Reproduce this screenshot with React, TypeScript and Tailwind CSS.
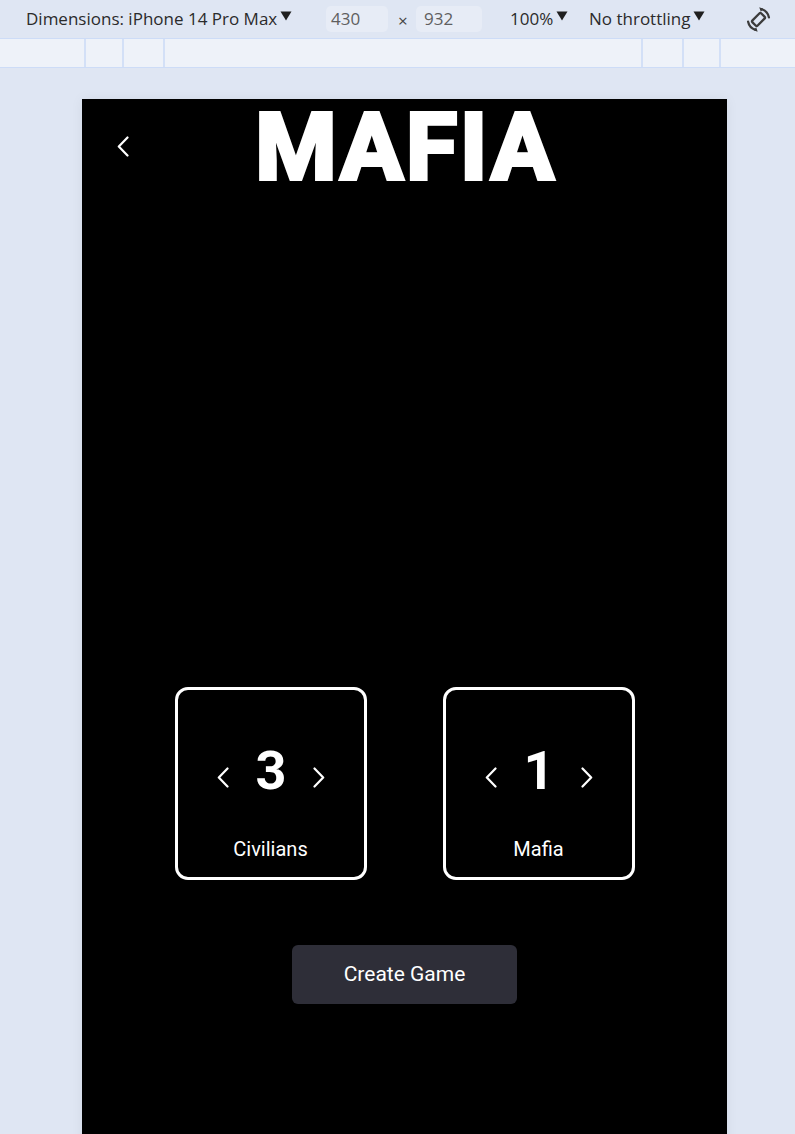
import React, { useState } from 'react';

const Chevron = ({ dir, className }: { dir: 'left' | 'right'; className?: string }) => (
  <svg width="12" height="21" viewBox="0 0 12 21" fill="none" className={className}>
    {dir === 'left' ? (
      <polyline points="10.5,1.5 1.8,10.5 10.5,19.5" stroke="white" strokeWidth="2.2" strokeLinecap="round" strokeLinejoin="round" />
    ) : (
      <polyline points="1.5,1.5 10.2,10.5 1.5,19.5" stroke="white" strokeWidth="2.2" strokeLinecap="round" strokeLinejoin="round" />
    )}
  </svg>
);

const Caret = () => (
  <svg width="12" height="10" viewBox="0 0 12 10" className="ml-[3px] -mt-[6px]">
    <path d="M0.5 0.5h11L6 9.5z" fill="#1f1f1f" />
  </svg>
);

const RotateIcon = () => (
  <svg width="27" height="27" viewBox="0 0 28 28" fill="none">
    <g stroke="#3c3c3c" strokeWidth="2.4" strokeLinecap="round" strokeLinejoin="round">
      <rect x="10.2" y="7.5" width="7.6" height="13" rx="1.5" transform="rotate(45 14 14)" />
      <path d="M17 3.3a11 11 0 0 1 7.8 8.5" />
      <path d="M11 24.7a11 11 0 0 1-7.8-8.5" />
    </g>
    <path d="M14.8 1.2l4.2 1.6-2.6 3.1z" fill="#3c3c3c" />
    <path d="M13.2 26.8l-4.2-1.6 2.6-3.1z" fill="#3c3c3c" />
  </svg>
);

const Counter = ({ value, label, onDec, onInc }: { value: number; label: string; onDec: () => void; onInc: () => void }) => (
  <div className="w-[192px] h-[193px] rounded-[13px] border-[3px] border-white flex flex-col items-center pt-[54px]">
    <div className="flex items-center gap-[27px]">
      <button onClick={onDec} className="mt-[12px]">
        <Chevron dir="left" />
      </button>
      <span className="text-[54px] leading-none font-bold text-white w-[30px] text-center">{value}</span>
      <button onClick={onInc} className="mt-[12px]">
        <Chevron dir="right" />
      </button>
    </div>
    <span className="mt-[41px] text-[20px] leading-none text-white">{label}</span>
  </div>
);

export default function App() {
  const [civilians, setCivilians] = useState(3);
  const [mafia, setMafia] = useState(1);

  return (
    <div className="w-[795px] h-[1134px] overflow-hidden bg-[#dfe6f3] font-['Open_Sans',sans-serif]">
      {/* devtools toolbar */}
      <div className="h-[38px] flex items-center text-[17px] text-[#2b2b2b]">
        <div className="ml-[26px] w-[300px] flex items-center">
          Dimensions: iPhone 14 Pro Max
          <Caret />
        </div>
        <div className="w-[62px] h-[26px] rounded-[5px] bg-[#e7ecf6] text-[#5f5f5f] flex items-center pl-[5px]">430</div>
        <span className="ml-[10px] w-[16px] text-[#444] text-[17px] mt-[3px]">×</span>
        <div className="ml-[2px] w-[66px] h-[26px] rounded-[5px] bg-[#e7ecf6] text-[#5f5f5f] flex items-center pl-[8px]">932</div>
        <div className="ml-[28px] w-[79px] flex items-center">
          100%
          <Caret />
        </div>
        <div className="w-[156px] flex items-center">
          No throttling
          <Caret />
        </div>
        <div className="mt-[1px]">
          <RotateIcon />
        </div>
      </div>
      {/* ruler row */}
      <div className="h-[30px] bg-[#eef2f9] border-y border-[#cddcf7] flex">
        <div className="w-[86px] border-r-2 border-[#d3e0f7]" />
        <div className="w-[38px] border-r-2 border-[#d3e0f7]" />
        <div className="w-[41px] border-r-2 border-[#d3e0f7]" />
        <div className="w-[478px] border-r-2 border-[#d3e0f7]" />
        <div className="w-[41px] border-r-2 border-[#d3e0f7]" />
        <div className="w-[37px] border-r-2 border-[#d3e0f7]" />
      </div>
      {/* device */}
      <div className="pt-[31px] pl-[82px]">
        <div className="w-[645px] h-[1100px] bg-black font-['Roboto',sans-serif] shadow-[0_0_12px_rgba(0,0,0,0.06)] flex flex-col items-center">
          <div className="w-full grid grid-cols-[1fr_auto_1fr]">
            <button className="justify-self-start ml-[35px] mt-[37px] self-start">
              <Chevron dir="left" />
            </button>
            <h1 className="text-[93px] leading-[98px] font-bold text-white tracking-[3px] pl-[3px] [-webkit-text-stroke:4px_white]">
              MAFIA
            </h1>
            <div />
          </div>
          <div className="mt-[490px] flex gap-[76px]">
            <Counter
              value={civilians}
              label="Civilians"
              onDec={() => setCivilians((v) => Math.max(0, v - 1))}
              onInc={() => setCivilians((v) => v + 1)}
            />
            <Counter
              value={mafia}
              label="Mafia"
              onDec={() => setMafia((v) => Math.max(0, v - 1))}
              onInc={() => setMafia((v) => v + 1)}
            />
          </div>
          <button className="mt-[65px] w-[225px] h-[59px] rounded-[6px] bg-[#2e2e38] text-white text-[21px] font-normal">
            Create Game
          </button>
        </div>
      </div>
    </div>
  );
}
